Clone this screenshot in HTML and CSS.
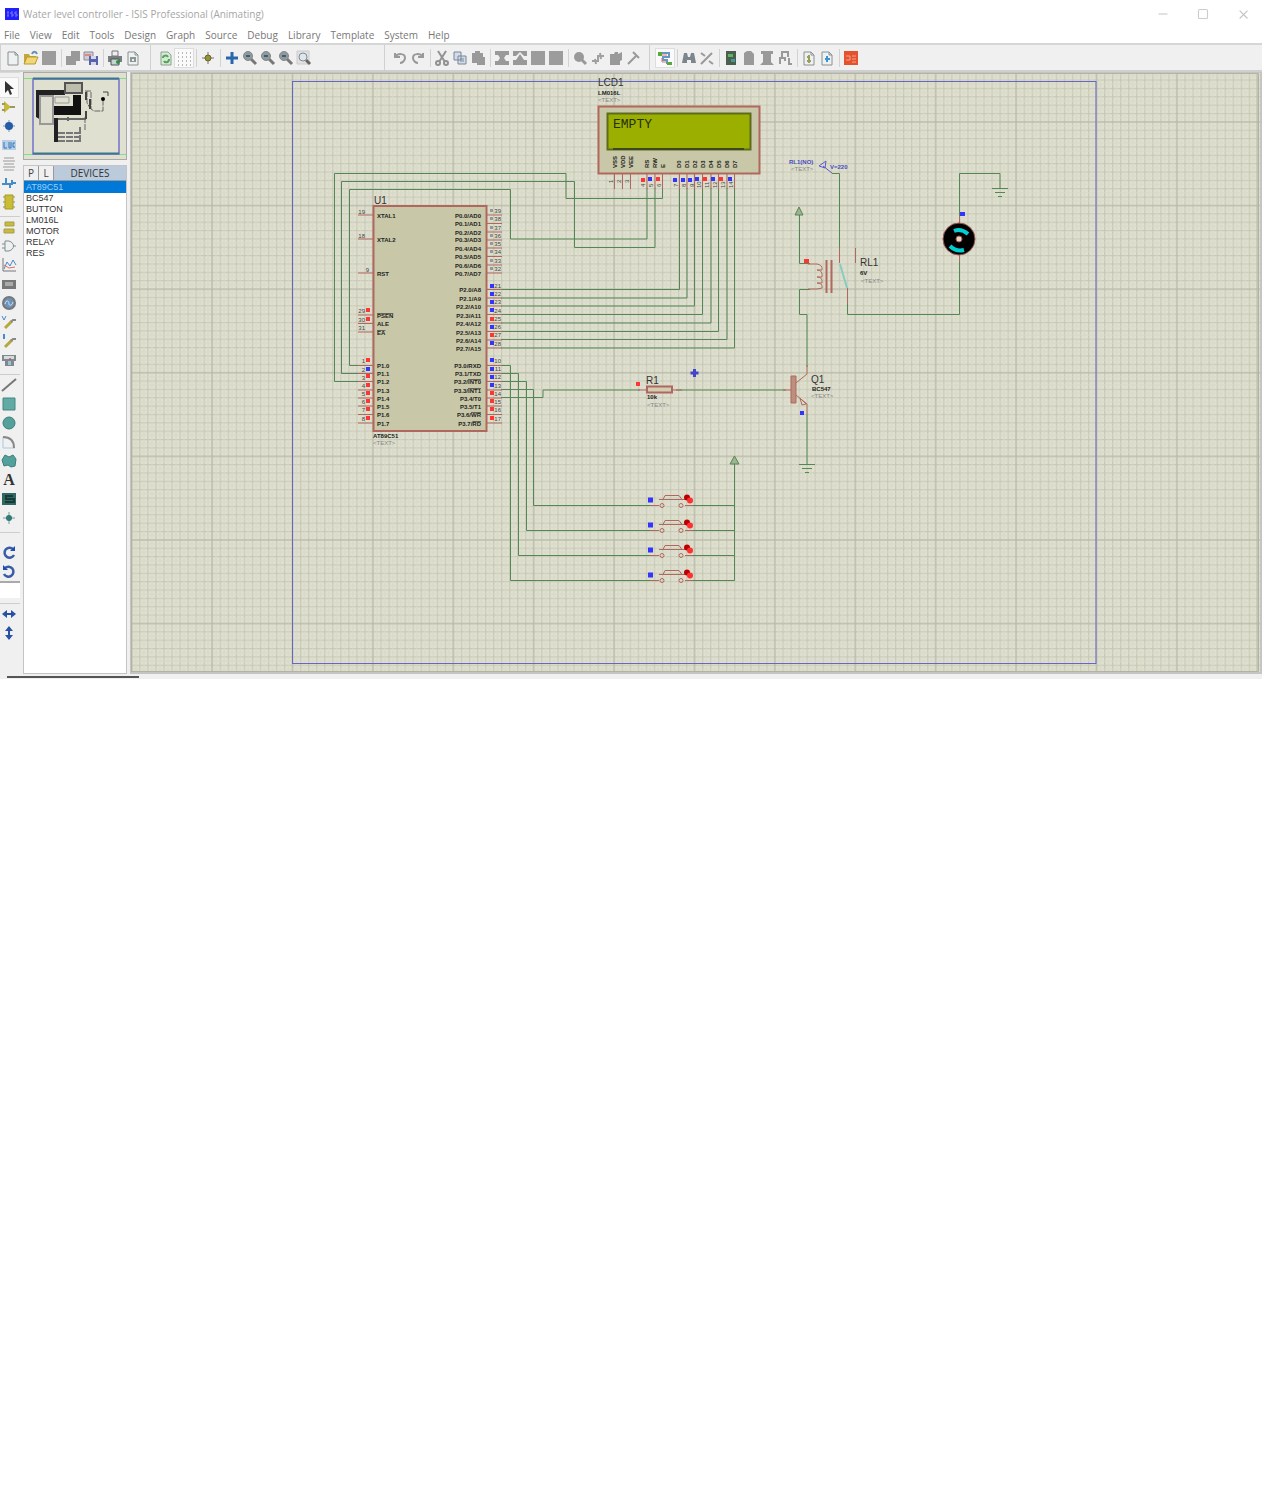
FILE: index.html
```html
<!DOCTYPE html>
<html lang="en">
<head>
<meta charset="utf-8">
<title>Water level controller - ISIS Professional (Animating)</title>
<link rel="stylesheet" href="styles.css">
</head>
<body>
<svg class="sprite" aria-hidden="true">
  <symbol id="mag" viewBox="0 0 16 16"><path d="M9 9l5 5" stroke="#777" stroke-width="3"/><circle cx="6" cy="6" r="4.500" fill="#8d9a9f" stroke="#888"/><path d="M4 6h4" stroke="#2a4a60" stroke-width="1.500"/></symbol>
  <symbol id="undo" viewBox="0 0 16 16"><path d="M3 3v4h5M3 7c3-4 10-4 10 1 0 3-3 5-5 5" fill="none" stroke="#999" stroke-width="2"/></symbol>
  <symbol id="page" viewBox="0 0 16 16"><path d="M3 2h7l3 3v10H3z" fill="#eef1f1" stroke="#8b9090"/><path d="M10 2v3h3" fill="none" stroke="#8b9090"/></symbol>
  <symbol id="block" viewBox="0 0 16 16"><path d="M1 1h14v14H1z" fill="#9c9c9c"/></symbol>
  <symbol id="rot" viewBox="0 0 16 16"><path d="M12 4a5 5 0 1 0 1 6" fill="none" stroke="#3a5ba8" stroke-width="2.500"/><path d="M9 6h5V1z" fill="#1f4fae"/></symbol>
  <symbol id="arrows" viewBox="0 0 16 16"><path d="M1 8l5-4v3h4V4l5 4-5 4V9H6v3z" fill="#2951a3"/></symbol>
  <symbol id="probe" viewBox="0 0 16 16"><path d="M4 14l7-7" stroke="#b5a83d" stroke-width="3"/><path d="M10 8l2-2h3" fill="none" stroke="#888" stroke-width="2"/></symbol>
</svg>
<div class="app">
  <header class="titlebar">
    <svg class="logo" viewBox="0 0 14 12"><path d="M0 0h14v12H0z" fill="#2020ff"/><path d="M2 4h2M2 8h2M3 4v4M8 4H6v2h2v2H6M12 4h-2v2h2v2h-2" stroke="#7d7dff" fill="none"/></svg>
    <h1 class="title">Water level controller - ISIS Professional (Animating)</h1>
    <div class="window-buttons">
      <button aria-label="Minimize"><svg viewBox="0 0 16 16"><path d="M4 8h8" stroke="#ccc"/></svg></button>
      <button aria-label="Maximize"><svg viewBox="0 0 16 16"><rect x="4" y="4" width="8" height="8" rx="1" fill="none" stroke="#ccc"/></svg></button>
      <button aria-label="Close"><svg viewBox="0 0 16 16"><path d="M5 5l7 7M12 5l-7 7" stroke="#c4c4c4"/></svg></button>
    </div>
  </header>
  <nav class="menubar">
    <a href="#">File</a><a href="#">View</a><a href="#">Edit</a><a href="#">Tools</a><a href="#">Design</a><a href="#">Graph</a><a href="#">Source</a><a href="#">Debug</a><a href="#">Library</a><a href="#">Template</a><a href="#">System</a><a href="#">Help</a>
  </nav>
  <div class="toolbars">
    <div class="toolbar toolbar-file">
      <div class="group">
        <button aria-label="New"><svg viewBox="0 0 16 16"><use href="#page"/></svg></button>
        <button aria-label="Open"><svg viewBox="0 0 16 16"><path d="M1 14V4h5l1 2h6v8z" fill="#c5a637"/><path d="M1 14l3-7h11l-3 7z" fill="#f0d778" stroke="#b99a32"/><path d="M9 4c1-3 4-3 5 0" fill="none" stroke="#678fb5" stroke-width="2"/></svg></button>
        <button aria-label="Save"><svg viewBox="0 0 16 16"><use href="#block"/></svg></button>
      </div>
      <div class="group">
        <button aria-label="Import section"><svg viewBox="0 0 16 16"><path d="M6 1h9v10h-4v4H1V6h5z" fill="#999"/></svg></button>
        <button aria-label="Export section"><svg viewBox="0 0 16 16"><path d="M1 2h9v8H1z" fill="#d2cbd1" stroke="#8988a0"/><path d="M6 6h9v9H6z" fill="#5664ad"/><path d="M8 6h5v3H8zM8 12h5v3H8z" fill="#d7d7ea"/><path d="M2 5h6" stroke="#d68d7b" stroke-width="2"/></svg></button>
      </div>
      <div class="group">
        <button aria-label="Print"><svg viewBox="0 0 16 16"><path d="M5 1h6v5H5z" fill="#eee" stroke="#777"/><path d="M1 6h14v6H1z" fill="#777e80"/><path d="M4 9h8v6H4z" fill="#c3d5d0" stroke="#555"/><circle cx="11" cy="12" r="2" fill="#378a4b"/></svg></button>
        <button aria-label="Mark output area"><svg viewBox="0 0 16 16"><use href="#page"/><path d="M5 7h6v5H5z" fill="#8b9695"/><path d="M7 9h2v2H7z" fill="#eee"/></svg></button>
      </div>
    </div>
    <div class="toolbar toolbar-view">
      <div class="group">
        <button aria-label="Redraw"><svg viewBox="0 0 16 16"><path d="M3 2h7l3 3v10H3z" fill="#d8e9d6" stroke="#8aa18a"/><path d="M5 8c0-3 4-3 5-1M11 9c0 4-4 4-5 2" fill="none" stroke="#4fa658" stroke-width="2"/></svg></button>
        <button class="pressed" aria-label="Grid"><svg viewBox="0 0 16 16"><path d="M2 3h13M2 7h13M2 11h13M2 15h13" stroke="#777" stroke-dasharray="1 3"/></svg></button>
      </div>
      <div class="group">
        <button aria-label="Origin"><svg viewBox="0 0 16 16"><path d="M8 2v12M2 8h12" stroke="#777"/><circle cx="8" cy="8" r="3" fill="#96903b" stroke="#666628"/></svg></button>
      </div>
      <div class="group">
        <button aria-label="Pan"><svg viewBox="0 0 16 16"><path d="M8 2v12M2 8h12" stroke="#2867ad" stroke-width="3"/></svg></button>
        <button aria-label="Zoom in"><svg viewBox="0 0 16 16"><use href="#mag"/></svg></button>
        <button aria-label="Zoom out"><svg viewBox="0 0 16 16"><use href="#mag"/></svg></button>
        <button aria-label="Zoom all"><svg viewBox="0 0 16 16"><use href="#mag"/></svg></button>
        <button aria-label="Zoom area"><svg viewBox="0 0 16 16"><path d="M1 1h12v13H1z" fill="#e1e1e1" stroke="#ccc"/><path d="M10 10l4 4" stroke="#666" stroke-width="3"/><circle cx="7" cy="7" r="4" fill="#dce8ec" stroke="#889"/></svg></button>
      </div>
    </div>
    <div class="toolbar toolbar-edit">
      <div class="group">
        <button aria-label="Undo"><svg viewBox="0 0 16 16"><use href="#undo"/></svg></button>
        <button aria-label="Redo"><svg viewBox="0 0 16 16"><use href="#undo" transform="matrix(-1 0 0 1 16 0)"/></svg></button>
      </div>
      <div class="group">
        <button aria-label="Cut"><svg viewBox="0 0 16 16"><path d="M4 1l7 11M12 1L5 12" stroke="#929292" stroke-width="2"/><circle cx="4" cy="13" r="2" fill="none" stroke="#929292" stroke-width="2"/><circle cx="12" cy="13" r="2" fill="none" stroke="#929292" stroke-width="2"/></svg></button>
        <button aria-label="Copy"><svg viewBox="0 0 16 16"><path d="M2 2h7v8H2zM6 6h8v8H6z" fill="#d4dce5" stroke="#76879a"/><path d="M8 9h4M8 11h4" stroke="#76879a"/></svg></button>
        <button aria-label="Paste"><svg viewBox="0 0 16 16"><path d="M2 3h3V1h5v2h3v4h2v8H7v-2H2z" fill="#999"/></svg></button>
      </div>
      <div class="group">
        <button aria-label="Block copy"><svg viewBox="0 0 16 16"><path d="M1 1h14v4h-3L10 8l2 3h3v4H1v-4h3l2-3-2-3H1z" fill="#999"/></svg></button>
        <button aria-label="Block move"><svg viewBox="0 0 16 16"><path d="M1 1h14v5h-3L8 2 4 6H1zM8 4l4 6h3v5H1v-5h3z" fill="#999"/></svg></button>
        <button aria-label="Block rotate"><svg viewBox="0 0 16 16"><use href="#block"/></svg></button>
        <button aria-label="Block delete"><svg viewBox="0 0 16 16"><use href="#block"/></svg></button>
      </div>
      <div class="group">
        <button aria-label="Pick parts"><svg viewBox="0 0 16 16"><circle cx="7" cy="7" r="5" fill="#999"/><path d="M10 10l4 4" stroke="#999" stroke-width="3"/></svg></button>
        <button aria-label="Make device"><svg viewBox="0 0 16 16"><path d="M2 11h6V6h6M6 14l-1-5M11 9l-1-6" fill="none" stroke="#a0a0a0" stroke-width="2"/></svg></button>
        <button aria-label="Packaging tool"><svg viewBox="0 0 16 16"><path d="M2 4h4l1-2h3v2l4-2v8l-2 1v4H2z" fill="#999"/></svg></button>
        <button aria-label="Decompose"><svg viewBox="0 0 16 16"><path d="M2 14l9-9M7 2l6 6" stroke="#999" stroke-width="2"/></svg></button>
      </div>
    </div>
    <div class="toolbar toolbar-design">
      <div class="group">
        <button class="pressed" aria-label="Wire autorouter"><svg viewBox="0 0 16 16"><path d="M4 3h8v4H6v3h4v4" fill="none" stroke="#6596c4" stroke-width="2"/><path d="M5 5h5M5 8v4h4" fill="none" stroke="#d27c6a"/><path d="M1 2h4v4H1zM10 12h5v3h-5z" fill="#58a83c"/></svg></button>
      </div>
      <div class="group">
        <button aria-label="Search and tag"><svg viewBox="0 0 16 16"><path d="M3 3h3l1 4h2l1-4h3l2 10h-5v-3H6v3H1z" fill="#7b868d"/></svg></button>
        <button aria-label="Property assignment"><svg viewBox="0 0 16 16"><path d="M2 14L13 3M2 3l4 3M10 11l4 3" stroke="#999" stroke-width="2"/></svg></button>
      </div>
      <div class="group">
        <button aria-label="Design explorer"><svg viewBox="0 0 16 16"><path d="M3 1h10v14H3z" fill="#4b5f4d"/><path d="M5 4h5v3H5z" fill="#66b16a"/><path d="M8 9h4v3H8z" fill="#499"/></svg></button>
        <button aria-label="New sheet"><svg viewBox="0 0 16 16"><path d="M3 3l3-2h4l3 3v11H3z" fill="#999"/></svg></button>
        <button aria-label="Remove sheet"><svg viewBox="0 0 16 16"><path d="M2 1h12v3h-2v8l3 3H1l3-3V4H2z" fill="#999"/></svg></button>
        <button aria-label="Exit to parent"><svg viewBox="0 0 16 16"><path d="M5 7V2h6v5M3 14V8h5v3M12 8v6h3" fill="none" stroke="#999" stroke-width="2"/></svg></button>
      </div>
      <div class="group">
        <button aria-label="Bill of materials"><svg viewBox="0 0 16 16"><use href="#page"/><path d="M8 5v8M6 7h3M6 11h4" stroke="#9d9c58" stroke-width="2"/></svg></button>
        <button aria-label="Electrical check"><svg viewBox="0 0 16 16"><use href="#page"/><path d="M8 6v6M6 9h5" stroke="#3d92cf" stroke-width="2"/></svg></button>
      </div>
      <div class="group">
        <button aria-label="Netlist to ARES"><svg viewBox="0 0 16 16"><path d="M1 1h14v14H1z" fill="#e4532d"/><path d="M3 6h4v4H3M9 6h4M9 9h4M9 12h4" fill="none" stroke="#f3a58d"/></svg></button>
      </div>
    </div>
  </div>

  <main class="workspace">
    <aside class="modes">
      <div class="mode-group">
        <button class="pressed" aria-label="Selection"><svg viewBox="0 0 16 16"><path d="M4 1v12l3-3 2 5 2-1-2-5h4z" fill="#333"/></svg></button>
        <button aria-label="Component"><svg viewBox="0 0 16 16"><path d="M3 2l7 6-7 6z" fill="#c6ba3e"/><path d="M1 5h3M1 11h3M9 8h5" stroke="#999a5c" stroke-width="2"/></svg></button>
        <button aria-label="Junction dot"><svg viewBox="0 0 16 16"><path d="M8 2v12M2 8h12" stroke="#7b93b5"/><circle cx="8" cy="8" r="4" fill="#225da5"/></svg></button>
        <button aria-label="Wire label"><svg viewBox="0 0 16 16"><path d="M1 3h14v10H1z" fill="#b7cfe6"/><path d="M3 5v6h3M8 5v6h2V5M14 6h-2v4h2" fill="none" stroke="#3574b7"/></svg></button>
        <button aria-label="Text script"><svg viewBox="0 0 16 16"><path d="M3 2h10M2 5h12M3 8h10M2 11h12M3 14h10" stroke="#999"/></svg></button>
        <button aria-label="Bus"><svg viewBox="0 0 16 16"><path d="M1 9h4V3M5 9h6V5M9 9v4M11 8h4" fill="none" stroke="#478bc9" stroke-width="2"/></svg></button>
        <button aria-label="Subcircuit"><svg viewBox="0 0 16 16"><path d="M2 3h12M2 8h12M2 13h12" stroke="#888"/><path d="M4 1h8v14H4z" fill="#c9bd35" stroke="#a69b25"/></svg></button>
      </div>
      <div class="mode-group">
        <button aria-label="Terminals"><svg viewBox="0 0 16 16"><path d="M4 3h9v4H4zM3 10h10v4H3z" fill="#c8bb3e" stroke="#a79f4a"/></svg></button>
        <button aria-label="Device pins"><svg viewBox="0 0 16 16"><path d="M4 3h4c6 2 6 8 0 10H4zM1 6h3M1 10h3M12 8h3" fill="none" stroke="#78908e"/></svg></button>
        <button aria-label="Graph"><svg viewBox="0 0 16 16"><path d="M2 1v13h13" fill="none" stroke="#777"/><path d="M3 12l3-7 3 4 3-6 3 5" fill="none" stroke="#4389c8"/><path d="M3 8l5 3 6-1" fill="none" stroke="#dd7162"/></svg></button>
        <button aria-label="Tape recorder"><svg viewBox="0 0 16 16"><path d="M1 4h14v9H1z" fill="#777"/><path d="M4 6h8v4H4z" fill="#aaa"/></svg></button>
        <button aria-label="Generator"><svg viewBox="0 0 16 16"><circle cx="8" cy="8" r="6" fill="#6e93bb" stroke="#777" stroke-width="2"/><path d="M4 9c2-6 4-2 4 0s3 2 4-2" fill="none" stroke="#d4e3f1"/></svg></button>
        <button aria-label="Voltage probe"><svg viewBox="0 0 16 16"><use href="#probe"/><path d="M1 2l2 4 2-4" fill="none" stroke="#478bc9"/></svg></button>
        <button aria-label="Current probe"><svg viewBox="0 0 16 16"><use href="#probe"/><path d="M3 1v5" stroke="#478bc9" stroke-width="2"/></svg></button>
        <button aria-label="Instruments"><svg viewBox="0 0 16 16"><path d="M1 3h14v6h-2v5H4V9H1z" fill="#80898d"/><path d="M3 4h10v3H3z" fill="#d2dde1"/><path d="M7 9h3v4H7z" fill="#a0bfdd"/><circle cx="9" cy="7" r="1" fill="#c54"/></svg></button>
      </div>
      <div class="mode-group">
        <button aria-label="Line"><svg viewBox="0 0 16 16"><path d="M1 14L15 2" stroke="#777" stroke-width="2"/></svg></button>
        <button aria-label="Box"><svg viewBox="0 0 16 16"><path d="M2 2h12v12H2z" fill="#61aaa5" stroke="#468682"/></svg></button>
        <button aria-label="Circle"><svg viewBox="0 0 16 16"><circle cx="8" cy="8" r="6" fill="#54a09c" stroke="#3d7c79"/></svg></button>
        <button aria-label="Arc"><svg viewBox="0 0 16 16"><path d="M2 14V3M2 14h12" stroke="#a9c9e6"/><path d="M2 3c7 0 11 4 11 11" fill="none" stroke="#888" stroke-width="2"/></svg></button>
        <button aria-label="Path"><svg viewBox="0 0 16 16"><path d="M4 2l4 2 4-2 3 4-1 7-4 1-3-2-4 1-2-6z" fill="#54a09c" stroke="#3d7c79"/></svg></button>
        <button class="letter">A</button>
        <button aria-label="Symbol"><svg viewBox="0 0 16 16"><path d="M1 2h14v12H1z" fill="#306762"/><path d="M12 5H5v3h8v3H4" fill="none" stroke="#173c38" stroke-width="2"/></svg></button>
        <button aria-label="Marker"><svg viewBox="0 0 16 16"><path d="M8 2v12M2 8h12" stroke="#799"/><circle cx="8" cy="8" r="3" fill="#2e7a74"/></svg></button>
      </div>
      <div class="mode-group rotate-group">
        <button aria-label="Rotate clockwise"><svg viewBox="0 0 16 16"><use href="#rot"/></svg></button>
        <button aria-label="Rotate anticlockwise"><svg viewBox="0 0 16 16"><use href="#rot" transform="matrix(-1 0 0 1 16 0)"/></svg></button>
        <input class="angle" type="text" aria-label="Angle">
      </div>
      <div class="mode-group">
        <button aria-label="Mirror horizontally"><svg viewBox="0 0 16 16"><use href="#arrows"/></svg></button>
        <button aria-label="Mirror vertically"><svg viewBox="0 0 16 16"><use href="#arrows" transform="rotate(90 8 8)"/></svg></button>
      </div>
    </aside>

    <aside class="side">
      <div class="overview">
        <svg viewBox="0 0 102 86">
          <path d="M0 5.500h102M0 81.500h102" stroke="#7be37b"/>
          <rect x="9" y="6" width="86" height="75" fill="none" stroke="#8d8dcd" stroke-width="2"/>
          <path d="M9 5.500h86M9 80.500h86" stroke="#3a7890" stroke-width="2"/>
          <path d="M12 17h29v5H17v25l-5-3z" fill="#222"/>
          <path d="M16 23h13v28H16z" fill="#deded0" stroke="#999" stroke-width="2"/>
          <path d="M30 33h19V22h8v20H30z" fill="#111"/>
          <path d="M41 10h17v10H41z" fill="#bdbdae" stroke="#555" stroke-width="2"/>
          <path d="M31 24h14v6H31z" fill="none" stroke="#999"/>
          <path d="M30 46h32M44 44v4" fill="none" stroke="#666" stroke-width="2"/>
          <path d="M32 45v24" stroke="#222" stroke-width="4"/>
          <path d="M34 60h22M34 64h22M34 68h22M56 54v16" fill="none" stroke="#777" stroke-width="2" stroke-dasharray="7 1"/>
          <path d="M63 18v12l3 5M61 44v14M61 18h6v18l3 2h9V25" fill="none" stroke="#666" stroke-dasharray="6 1"/>
          <path d="M62 19v8M66 26v10M62 38v8" stroke="#444" stroke-width="2"/>
          <circle cx="79" cy="26" r="2"/><path d="M79 19h5v4" fill="none" stroke="#444"/>
        </svg>
      </div>
      <section class="picker">
        <div class="picker-head">
          <button>P</button><button>L</button><h2>DEVICES</h2>
        </div>
        <ul class="devices">
          <li class="selected">AT89C51</li><li>BC547</li><li>BUTTON</li><li>LM016L</li><li>MOTOR</li><li>RELAY</li><li>RES</li>
        </ul>
      </section>
    </aside>

    <section class="sheet">
      <svg class="schematic" viewBox="131 73 1129 599" role="img" aria-label="Schematic">
        <defs>
          <pattern id="minor" x="131.200" y="79.500" width="8.040" height="8.360" patternUnits="userSpaceOnUse"><path d="M.5 0v8.360M0 .5h8.040" stroke="#c8c9b5" stroke-width="1.500"/><path d="M4.500 0v8.360M0 4.700h8.040" stroke="#d7d8c6"/></pattern>
          <pattern id="major" x="211" y="121" width="80.400" height="83.600" patternUnits="userSpaceOnUse"><path d="M1 0v83.600M0 1h80.400" stroke="#b7b8a5"/></pattern>
          <g id="ground"><path d="M-8 0H8M-5 4H5M-2 8H2"/></g>
          <g id="button">
            <path class="part" d="M650 0h9M685 0h8M659-6h26M663-6l2-4h14l3 4"/>
            <circle class="part" cx="662" cy="0" r="2"/><circle class="part" cx="681" cy="0" r="2"/>
            <path class="lo" d="M648-8h5v5h-5z"/><circle cx="687" cy="-8" r="3" fill="#b80000"/><circle cx="690" cy="-5" r="3" fill="#ff3030"/>
          </g>
        </defs>
        <path fill="#dfe0d0" d="M131 73h1129v599H131z"/>
        <path fill="url(#minor)" d="M131 73h1129v599H131z"/>
        <path fill="url(#major)" d="M131 73h1129v599H131z"/>
        <path d="M131.500 672V73.500H1258.500V671.500H131" fill="none" stroke="#b2b3a2"/>
        <rect class="frame" x="292.500" y="81.500" width="803.500" height="582"/>

        <g class="wire">
          <path d="M365 381.500H334.500v-208h231.500v25h96.500V188"/>
          <path d="M365 373.500H341.500v-192h233v66h80.500V188"/>
          <path d="M365 365.500H349.500v-176h161v49.500h136.500V188"/>
          <path d="M501 289.500h178.500V188M501 298h186V188M501 306h193.500V188M501 314.500h201.500V188M501 323h210V188M501 331.500h217.500V188M501 339.500h226V188M501 348h233.500V188"/>
          <path d="M501 365.500h9.500v215H650M501 373.500h17.500v182H650M501 381.500h25.500v149H650M501 389.500h32.500v116H650M501 397.500h42V390h97M676 390h110"/>
          <path d="M693 505.500h41.500M693 530.500h41.500M693 555.500h41.500M693 580.500h41.500V460"/>
          <path d="M799.500 208v55.500H810M832 173.500h7.500V248M810 289.500H799.500V314.500h7.500V367M847.500 303v11.500H959.500V262M959.500 216v-42.500H1000V188M807 414v50"/>
          <path d="M730 464h9l-4.500-8zM795 215h8l-4-8z" fill="#9db391"/>
          <use href="#ground" x="1000" y="188.500"/><use href="#ground" x="807" y="464.500"/>
        </g>

        <g class="part">
          <rect x="373.500" y="206" width="113" height="225" fill="#c8c8a8" stroke-width="2"/>
          <path d="M358 215h15M358 239h15M358 273h15M358 315h15M358 323.500h15M358 332h15M358 365.500h15M358 373.500h15M358 381.500h15M358 390h15M358 398h15M358 406h15M358 414.500h15M358 423h15"/>
          <path d="M487 215h15M487 223.500h15M487 232h15M487 240h15M487 248h15M487 256.500h15M487 265h15M487 273h15M487 289.500h15M487 298h15M487 306h15M487 314.500h15M487 323h15M487 331.500h15M487 340h15M487 348h15M487 365.500h15M487 373.500h15M487 381.500h15M487 390h15M487 398h15M487 406h15M487 414.500h15M487 423h15"/>
          <rect x="598.500" y="106.500" width="161" height="67" fill="#c8c8a8" stroke-width="2"/>
          <path d="M614.500 174v15M622.500 174v15M630.500 174v15M647 174v15M655 174v15M662.500 174v15M679.500 174v15M687 174v15M694.500 174v15M702.500 174v15M711 174v15M718.500 174v15M727 174v15M734.500 174v15"/>
          <path d="M638 390h9M672 390h10"/>
          <path d="M647 386.500h25v6h-25z" fill="#d3cdb4" stroke-width="2"/>
          <path d="M783 390h8M796 383l11-9v-9M796 395l11 9v10M800 398l6 6-4 1z"/>
          <path d="M791 376h5v27h-5z" fill="#bb907c"/>
          <path d="M808 264h9q6 1 5 6h-5q6 0 5 7h-5q6 0 5 6h-5q6 0 5 5l-5 1h-9"/>
          <path d="M826.500 260v33M831.500 260v33" stroke-width="2"/>
          <path d="M839.500 248v15M847.500 288v16M855.500 248v15M959.500 216v46"/>
        </g>
        <path d="M840 264l7 24" stroke="#84cec0" stroke-width="2"/>
        <rect x="607.500" y="113.500" width="143" height="36" fill="#9aaf00" stroke="#5d6a1f" stroke-width="2"/>
        <path d="M613 149h131" stroke="#3e4920" stroke-width="2"/>
        <circle cx="959" cy="239" r="16" fill="#000" stroke="#955"/>
        <path d="M954 231q7-3 14 3M950 246q6 6 14 4" fill="none" stroke="#00ced0" stroke-width="4"/>
        <circle cx="959" cy="239" r="3" fill="#e4d8bd" stroke="#955"/>
        <path d="M694.500 369v8M690.500 373h8" stroke="#4444c8" stroke-width="3"/>
        <path d="M819 166l7-5-1 7zM823 166l9 7" fill="none" stroke="#5c5cc8"/>

        <use href="#button" y="505.500"/><use href="#button" y="530.500"/><use href="#button" y="555.500"/><use href="#button" y="580.500"/>

        <path class="hi" d="M366 308h4v4h-4zM366 317h4v4h-4zM366 358h4v4h-4zM366 374h4v4h-4zM366 383h4v4h-4zM366 391h4v4h-4zM366 399h4v4h-4zM366 407h4v4h-4zM366 416h4v4h-4zM490 317h4v4h-4zM490 333h4v4h-4zM490 391h4v4h-4zM490 399h4v4h-4zM490 407h4v4h-4zM490 416h4v4h-4zM641 178h4v4h-4zM656 177h4v4h-4zM703 177h4v4h-4zM719 177h4v4h-4zM636 382h4v4h-4zM804 259h5v4h-5z"/>
        <path class="lo" d="M366 367h4v4h-4zM490 284h4v4h-4zM490 292h4v4h-4zM490 300h4v4h-4zM490 308h4v4h-4zM490 325h4v4h-4zM490 341h4v4h-4zM490 358h4v4h-4zM490 367h4v4h-4zM490 375h4v4h-4zM490 383h4v4h-4zM648 177h4v4h-4zM673 178h4v4h-4zM681 178h4v4h-4zM688 178h4v4h-4zM695 177h4v4h-4zM711 177h4v4h-4zM728 177h4v4h-4zM800 411h4v4h-4zM960 212h5v4h-5z"/>
        <path fill="#94989c" d="M490 209h3v3h-3zM490 217h3v3h-3zM490 226h3v3h-3zM490 234h3v3h-3zM490 242h3v3h-3zM490 250h3v3h-3zM490 259h3v3h-3zM490 267h3v3h-3z"/>

        <g class="pin">
          <text x="377" y="218">XTAL1</text><text x="377" y="242">XTAL2</text><text x="377" y="276">RST</text>
          <text x="377" y="318" class="over">PSEN</text><text x="377" y="326">ALE</text><text x="377" y="335" class="over">EA</text>
          <text x="377" y="368">P1.0</text><text x="377" y="376">P1.1</text><text x="377" y="384">P1.2</text><text x="377" y="393">P1.3</text><text x="377" y="401">P1.4</text><text x="377" y="409">P1.5</text><text x="377" y="417">P1.6</text><text x="377" y="426">P1.7</text>
        </g>
        <g class="pin end">
          <text x="481" y="218">P0.0/AD0</text><text x="481" y="226">P0.1/AD1</text><text x="481" y="235">P0.2/AD2</text><text x="481" y="242">P0.3/AD3</text><text x="481" y="251">P0.4/AD4</text><text x="481" y="259">P0.5/AD5</text><text x="481" y="268">P0.6/AD6</text><text x="481" y="276">P0.7/AD7</text>
          <text x="481" y="292">P2.0/A8</text><text x="481" y="301">P2.1/A9</text><text x="481" y="309">P2.2/A10</text><text x="481" y="318">P2.3/A11</text><text x="481" y="326">P2.4/A12</text><text x="481" y="335">P2.5/A13</text><text x="481" y="343">P2.6/A14</text><text x="481" y="351">P2.7/A15</text>
          <text x="481" y="368">P3.0/RXD</text><text x="481" y="376">P3.1/TXD</text><text x="481" y="384">P3.2/<tspan class="over">INT0</tspan></text><text x="481" y="393">P3.3/<tspan class="over">INT1</tspan></text><text x="481" y="401">P3.4/T0</text><text x="481" y="409">P3.5/T1</text><text x="481" y="417">P3.6/<tspan class="over">WR</tspan></text><text x="481" y="426">P3.7/<tspan class="over">RD</tspan></text>
        </g>
        <g class="pin num end">
          <text x="365" y="214">19</text><text x="365" y="238">18</text><text x="369" y="272">9</text><text x="365" y="313">29</text><text x="365" y="322">30</text><text x="365" y="330">31</text>
          <text x="365" y="363">1</text><text x="365" y="372">2</text><text x="365" y="380">3</text><text x="365" y="388">4</text><text x="365" y="396">5</text><text x="365" y="404">6</text><text x="365" y="412">7</text><text x="365" y="421">8</text>
          <text x="501" y="213">39</text><text x="501" y="221">38</text><text x="501" y="230">37</text><text x="501" y="238">36</text><text x="501" y="246">35</text><text x="501" y="254">34</text><text x="501" y="263">33</text><text x="501" y="271">32</text>
          <text x="501" y="288">21</text><text x="501" y="296">22</text><text x="501" y="304">23</text><text x="501" y="313">24</text><text x="501" y="321">25</text><text x="501" y="329">26</text><text x="501" y="337">27</text><text x="501" y="346">28</text>
          <text x="501" y="363">10</text><text x="501" y="371">11</text><text x="501" y="379">12</text><text x="501" y="388">13</text><text x="501" y="396">14</text><text x="501" y="404">15</text><text x="501" y="412">16</text><text x="501" y="421">17</text>
        </g>
        <g class="pin" transform="rotate(-90)">
          <text x="-168" y="617">VSS</text><text x="-168" y="625">VDD</text><text x="-168" y="633">VEE</text>
          <text x="-168" y="649">RS</text><text x="-168" y="657">RW</text><text x="-168" y="665">E</text>
          <text x="-168" y="681">D0</text><text x="-168" y="689">D1</text><text x="-168" y="697">D2</text><text x="-168" y="705">D3</text><text x="-168" y="713">D4</text><text x="-168" y="721">D5</text><text x="-168" y="729">D6</text><text x="-168" y="737">D7</text>
        </g>
        <g class="pin num" transform="rotate(-90)">
          <text x="-183" y="613">1</text><text x="-183" y="621">2</text><text x="-183" y="629">3</text><text x="-187" y="645">4</text><text x="-187" y="653">5</text><text x="-187" y="661">6</text>
          <text x="-187" y="678">7</text><text x="-187" y="686">8</text><text x="-187" y="694">9</text><text x="-188" y="701">10</text><text x="-188" y="709">11</text><text x="-188" y="717">12</text><text x="-188" y="725">13</text><text x="-188" y="733">14</text>
        </g>
        <g class="ref">
          <text x="374" y="204">U1</text><text x="598" y="86">LCD1</text><text x="646" y="384">R1</text><text x="811" y="383">Q1</text><text x="860" y="266">RL1</text>
        </g>
        <g class="pin">
          <text x="373" y="438">AT89C51</text><text x="598" y="95">LM016L</text><text x="647" y="399">10k</text><text x="812" y="391">BC547</text><text x="860" y="275">6V</text>
        </g>
        <g class="hint">
          <text x="373" y="445">&lt;TEXT&gt;</text><text x="598" y="102">&lt;TEXT&gt;</text><text x="647" y="407">&lt;TEXT&gt;</text><text x="811" y="398">&lt;TEXT&gt;</text><text x="861" y="283">&lt;TEXT&gt;</text><text x="791" y="171">&lt;TEXT&gt;</text>
        </g>
        <text class="net" x="789" y="164">RL1(NO)</text><text class="net" x="830" y="169">V=220</text>
        <text class="lcd" x="613" y="128">EMPTY</text>
      </svg>
    </section>
  </main>
  <footer class="statusbar"><span></span></footer>
</div>
</body>
</html>
```
FILE: styles.css
```css
* { box-sizing: border-box; }

body {
  margin: 0;
  background: #fff;
  font-family: "Open Sans", "Noto Sans", sans-serif;
}

button {
  padding: 0;
  border: 0;
  background: none;
  font: inherit;
}

.sprite { position: absolute; width: 0; height: 0; }

.app { margin-right: 10px; background: #f0f0f0; }

.titlebar {
  display: flex;
  align-items: center;
  height: 27px;
  padding: 0 10px 0 5px;
  gap: 4px;
  background: #fff;
}
.logo { width: 14px; height: 12px; }
.title {
  flex: 1;
  margin: 0;
  color: #a6a6a6;
  font-size: 10px;
  font-weight: 400;
}
.window-buttons { display: flex; gap: 22px; }
.window-buttons button { width: 18px; height: 18px; }
.window-buttons svg { display: block; width: 18px; height: 18px; }

.menubar {
  display: flex;
  align-items: center;
  gap: 10px;
  height: 16px;
  padding-left: 4px;
  background: #fff;
}
.menubar a { color: #777; font-size: 10px; line-height: 14px; text-decoration: none; }

.toolbars {
  display: flex;
  height: 29px;
  border-top: 2px solid #d5d7d5;
  border-bottom: 2px solid #cfcfcf;
}
.toolbar {
  display: flex;
  align-items: center;
  gap: 6px;
  padding-left: 6px;
  border-left: 1px solid #d0d0d0;
}
.toolbar-file { flex: 0 0 150px; padding-left: 3px; }
.toolbar-view { flex: 0 0 234px; }
.toolbar-edit { flex: 0 0 265px; }
.toolbar-design { flex: 1; }
.group { display: flex; }
.group + .group { position: relative; }
.group + .group::before {
  content: "";
  position: absolute;
  left: -3px;
  width: 1px;
  height: 18px;
  background: #d2d2d2;
}
.group button { width: 18px; height: 18px; }
.group svg { display: block; width: 16px; height: 16px; margin: 0 auto; }
.pressed { background: #fafafa; outline: 1px solid #ddd; }

.workspace {
  display: grid;
  grid-template-columns: 20px 104px 1fr;
  column-gap: 3px;
}

.modes { padding-top: 5px; border-top: 1px solid #d8d8d8; }
.mode-group { padding-bottom: 5px; }
.mode-group + .mode-group { border-top: 1px solid #cdcdcd; }
.mode-group button { display: block; width: 18px; height: 19px; }
.mode-group svg { display: block; width: 16px; height: 16px; margin: 0 auto; }
.mode-group .letter {
  color: #333;
  font: bold 16px/19px "Liberation Serif", serif;
}
.mode-group.rotate-group { padding-top: 10px; }
.angle {
  display: block;
  width: 20px;
  height: 17px;
  border: 0;
  border-top: 2px solid #aaa;
  background: #fff;
}

.side { display: flex; flex-direction: column; gap: 5px; }
.overview {
  height: 88px;
  border: 1px solid #aaa;
  background: #dfe0d0;
}
.overview svg { display: block; width: 100%; height: 86px; }
.picker {
  flex: 1;
  border: 1px solid #c4c4c4;
  background: #fff;
}
.picker-head {
  display: flex;
  height: 15px;
  border-bottom: 1px solid #999;
  background: #bccbdc;
}
.picker-head button {
  width: 15px;
  border-right: 1px solid #999;
  background: #f0f0f0;
  color: #444;
  font-size: 10px;
  line-height: 14px;
}
.picker-head h2 {
  flex: 1;
  margin: 0;
  color: #333;
  font-size: 10px;
  font-weight: 400;
  line-height: 14px;
  text-align: center;
}
.devices {
  margin: 0;
  padding: 0;
  list-style: none;
  color: #333;
  font: 9px/11px "Liberation Sans", Arial, sans-serif;
}
.devices li { padding-left: 2px; }
.devices .selected { background: #0078d7; color: #9fd0f5; line-height: 12px; }

.sheet { border: 1px solid #c4c4c4; border-width: 1px 2px 2px 1px; }
.schematic { display: block; width: 100%; height: auto; }
.frame { fill: none; stroke: #6666c8; stroke-width: 1px; }
.wire { fill: none; stroke: #558655; stroke-width: 1px; }
.part { fill: none; stroke: #b0685e; stroke-width: 1px; }
.hi { fill: #ff3434; }
.lo { fill: #3434ff; }
.schematic text { font-family: "Liberation Sans", Arial, sans-serif; }
.pin { fill: #222; font-size: 6px; font-weight: 700; }
.num { fill: #444; font-weight: 400; }
.end { text-anchor: end; }
.over { text-decoration: overline; }
.ref { fill: #333; font-size: 10px; }
.hint { fill: #888; font-size: 6px; }
.net { fill: #4a4ac0; font-size: 6px; font-weight: 700; }
.schematic .lcd { fill: #28300a; font: 13px "Liberation Mono", monospace; }

.statusbar { height: 5px; padding: 2px 7px 0; }
.statusbar span { display: block; width: 132px; height: 2px; background: #555; }
```
